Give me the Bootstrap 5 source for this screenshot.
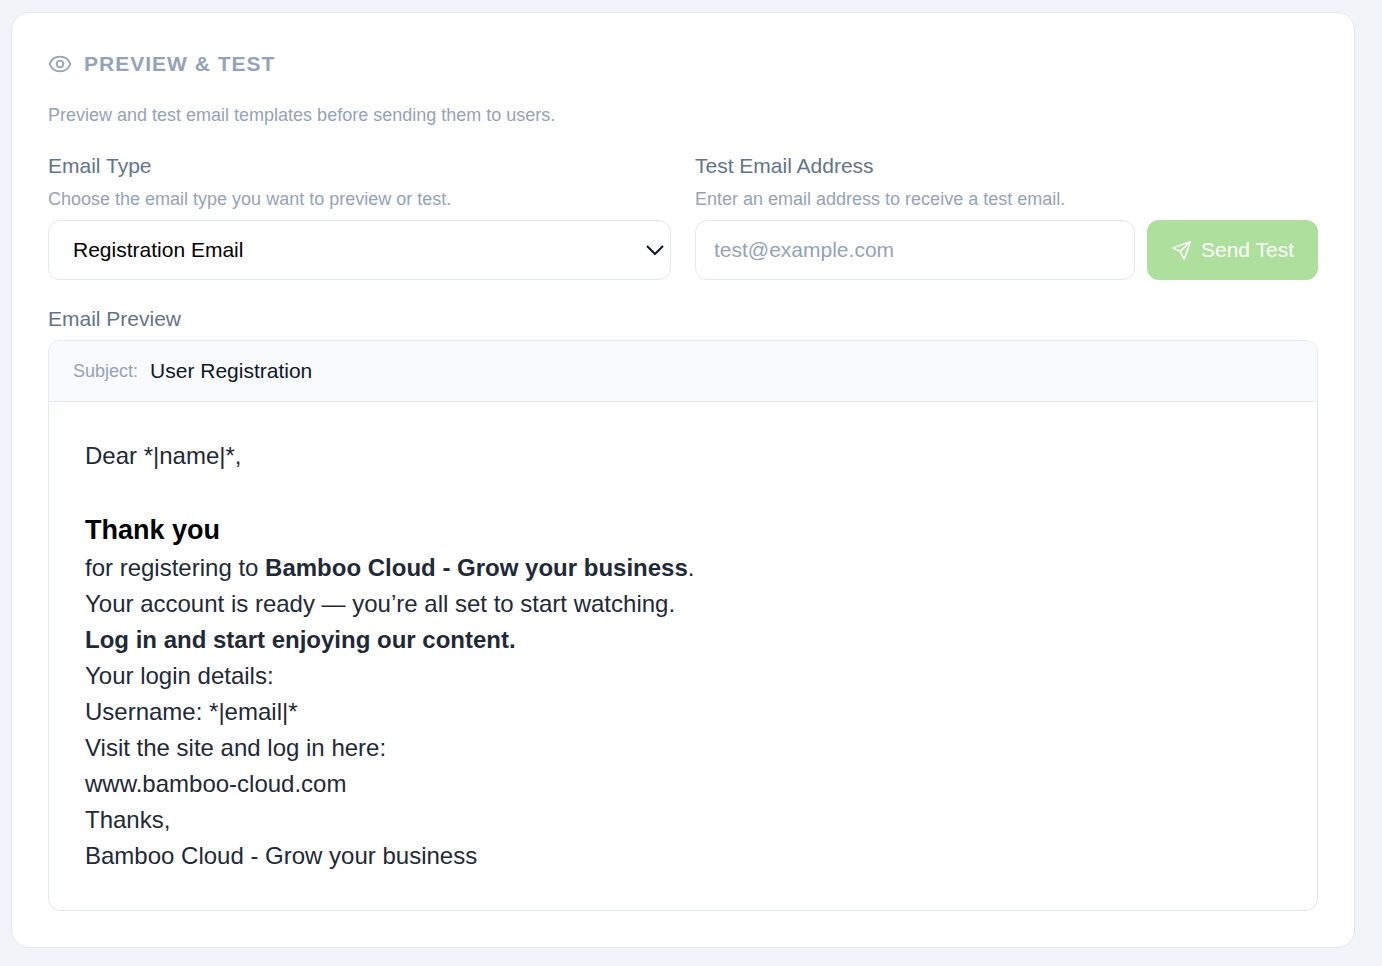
<!DOCTYPE html>
<html lang="en">
<head>
<meta charset="utf-8">
<meta name="viewport" content="width=device-width, initial-scale=1">
<title>Preview &amp; Test</title>
<link href="https://cdn.jsdelivr.net/npm/bootstrap@5.3.0/dist/css/bootstrap.min.css" rel="stylesheet">
<style>
  body { background: #f1f5f9; font-family: "Liberation Sans", Arial, sans-serif; padding: 12px 27px 18px 11px; color: #000; }
  .panel { background: #fff; border: 1px solid #e2e8f0; border-radius: 18px; padding: 36px; }
  .panel-head { gap: 12px; }
  .panel-title { font-size: 21px; line-height: 30px; font-weight: 700; letter-spacing: 1px; color: #94a3b8; margin: 0; }
  .hint { font-size: 18px; line-height: 24px; color: #94a3b8; margin: 0; }
  .field-title { font-size: 21px; line-height: 30px; color: #64748b; margin: 0; display: block; }
  .field-hint { margin: 6px 0 9px; }
  .preview-title { margin-bottom: 6px; }
  .fields { gap: 24px; }
  .send-row { gap: 12px; }
  .field { flex: 1 1 0; min-width: 0; }
  .form-select, .form-control { height: 60px; border: 1px solid #e2e8f0; border-radius: 12px; font-size: 21px; line-height: 30px; color: #000; }
  .form-select { padding: 0 40px 0 24px; background-position: right 6px center; background-size: 18px 12px;
    background-image: url("data:image/svg+xml,%3Csvg xmlns='http://www.w3.org/2000/svg' viewBox='0 0 18 12'%3E%3Cpath d='M1 2l8 8 8-8' fill='none' stroke='%230f172a' stroke-width='2' stroke-linejoin='round'/%3E%3C/svg%3E"); }
  .form-control { padding: 0 18px; }
  .form-control::placeholder { color: #94a3b8; }
  .btn-send { gap: 9px; height: 60px; border-radius: 12px; border: 0; background: #addf9d; color: #fff; font-size: 21px; line-height: 30px; padding: 0 24px; }
  .btn-send:hover { background: #9dd58b; color: #fff; }
  .mail { border: 1px solid #e2e8f0; border-radius: 12px; overflow: hidden; }
  .mail-subject { gap: 12px; background: #f8fafc; border-bottom: 1px solid #e2e8f0; padding: 15px 24px; font-size: 21px; line-height: 30px; color: #0f172a; }
  .mail-body { padding: 36px; font-size: 24px; line-height: 36px; color: #1f2937; }
  .mail-body p { margin: 0; }
  .mail-body h2 { font-size: 27px; line-height: 40px; font-weight: 700; color: #000; margin: 36px 0 0; }
</style>
</head>
<body>
<main class="panel">
  <header class="panel-head d-flex align-items-center mb-4">
    <svg width="24" height="24" viewBox="0 0 24 24" fill="none" stroke="#94a3b8" stroke-width="1.8" stroke-linecap="round" stroke-linejoin="round" aria-hidden="true"><path d="M1.600 12C3.400 7.300 7.400 4.700 12 4.700S20.600 7.300 22.400 12C20.600 16.700 16.600 19.300 12 19.300S3.400 16.700 1.600 12Z"/><circle cx="12" cy="12" r="3.300"/></svg>
    <h1 class="panel-title text-uppercase">Preview &amp; Test</h1>
  </header>
  <p class="hint mb-4">Preview and test email templates before sending them to users.</p>
  <div class="d-flex fields mb-4">
    <div class="field">
      <label class="field-title" for="type">Email Type</label>
      <p class="hint field-hint">Choose the email type you want to preview or test.</p>
      <select class="form-select" id="type"><option>Registration Email</option></select>
    </div>
    <div class="field">
      <label class="field-title" for="addr">Test Email Address</label>
      <p class="hint field-hint">Enter an email address to receive a test email.</p>
      <div class="d-flex send-row">
        <input class="form-control" type="email" id="addr" placeholder="test@example.com">
        <button class="btn btn-send d-flex align-items-center flex-shrink-0" type="button">
          <svg width="21" height="21" viewBox="0 0 24 24" fill="none" stroke="currentColor" stroke-width="1.8" stroke-linecap="round" stroke-linejoin="round" aria-hidden="true"><path d="M22 2 2 9l8.500 4L15 22ZM22 2 10.500 13"/></svg>
          Send Test</button>
      </div>
    </div>
  </div>
  <h2 class="field-title preview-title">Email Preview</h2>
  <section class="mail">
    <div class="mail-subject d-flex align-items-center"><span class="hint">Subject:</span><span>User Registration</span></div>
    <div class="mail-body">
      <p>Dear *|name|*,</p>
      <h2>Thank you</h2>
      <p>for registering to <strong>Bamboo Cloud - Grow your business</strong>.</p>
      <p>Your account is ready — you’re all set to start watching.</p>
      <p><strong>Log in and start enjoying our content.</strong></p>
      <p>Your login details:</p>
      <p>Username: *|email|*</p>
      <p>Visit the site and log in here:</p>
      <p>www.bamboo-cloud.com</p>
      <p>Thanks,</p>
      <p>Bamboo Cloud - Grow your business</p>
    </div>
  </section>
</main>
<script src="https://cdn.jsdelivr.net/npm/bootstrap@5.3.0/dist/js/bootstrap.bundle.min.js"></script>
</body>
</html>
